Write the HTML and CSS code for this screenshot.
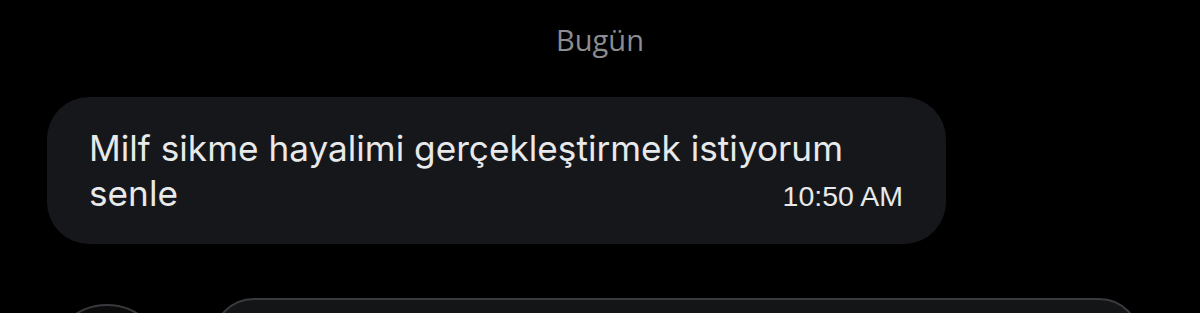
FILE: index.html
```html
<!DOCTYPE html>
<html lang="tr">
<head>
    <meta charset="UTF-8">
    <meta name="viewport" content="width=device-width, initial-scale=1.0">
    <title>Mesajlar</title>
    <link rel="stylesheet" href="styles.css">
</head>
<body>
    <div class="sohbet">
        <div class="tarih">Bugün</div>

        <div class="mesaj">
            <p class="mesaj-metin">Milf sikme hayalimi gerçekleştirmek istiyorum</p>
            <div class="son-satir">
                <span class="mesaj-metin">senle</span>
                <span class="saat">10:50 AM</span>
            </div>
        </div>
    </div>

    <div class="yazma-alani">
        <div class="yuvarlak-btn"></div>
        <div class="girdi"></div>
    </div>
</body>
</html>
```

FILE: styles.css
```css
body {
    margin: 0;
    background-color: #000;
    font-family: Inter, Roboto, sans-serif;
    color: #e7e9ea;
    overflow: hidden;
}

.sohbet {
    padding: 20px 0 0 47px;
}

.tarih {
    font-family: "Open Sans", sans-serif;
    font-size: 29px;
    line-height: 40px;
    color: #8b8d91;
    text-align: center;
    margin-left: -47px;
}

.mesaj {
    width: 815px;
    margin-top: 37px;
    padding: 29px 42px 25px 42px;
    background-color: #16171a;
    border-radius: 42px;
}

.mesaj-metin {
    margin: 0;
    font-size: 35.2px;
    line-height: 45px;
}

.son-satir {
    display: flex;
    justify-content: space-between;
    align-items: baseline;
}

.saat {
    font-family: "Liberation Sans", Arial, sans-serif;
    font-size: 28.5px;
    line-height: 45px;
    margin-right: 1px;
}

.yazma-alani {
    display: flex;
    align-items: center;
    gap: 47px;
    margin-top: 54px;
    padding-left: 49px;
}

.yuvarlak-btn {
    width: 112px;
    height: 112px;
    border: 2px solid #38393c;
    border-radius: 50%;
    background-color: #0b0b0c;
    flex-shrink: 0;
}

.girdi {
    width: 925px;
    height: 124px;
    border: 2px solid #3a3b3e;
    border-radius: 42px;
    background-color: #141517;
}
```
